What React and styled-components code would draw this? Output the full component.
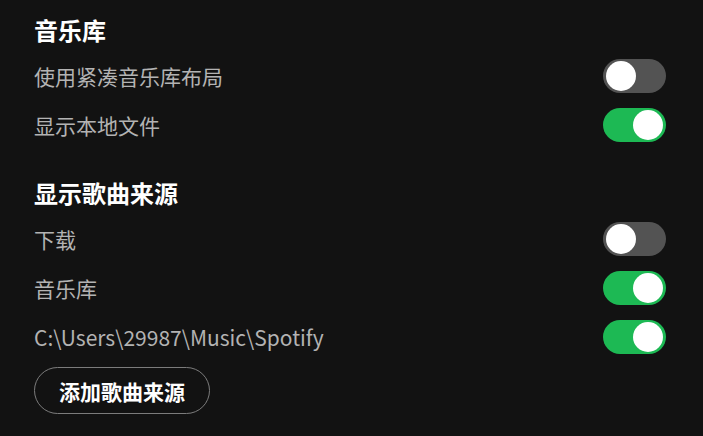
import React, { useState } from "react";
import styled, { createGlobalStyle } from "styled-components";

const GlobalStyle = createGlobalStyle`
  html, body {
    margin: 0;
    background: #121212;
  }
  body {
    font-family: "Noto Sans CJK SC", "Noto Sans", sans-serif;
  }
`;

const sections = [
  {
    title: "音乐库",
    items: [
      { id: "compact", label: "使用紧凑音乐库布局", on: false },
      { id: "local", label: "显示本地文件", on: true },
    ],
  },
  {
    title: "显示歌曲来源",
    items: [
      { id: "downloads", label: "下载", on: false },
      { id: "library", label: "音乐库", on: true },
      { id: "spotify", label: "C:\\Users\\29987\\Music\\Spotify", on: true },
    ],
  },
];

const Toggle = ({ on, onClick }) => (
  <Track $on={on} onClick={onClick} role="switch" aria-checked={on}>
    <Knob $on={on} />
  </Track>
);

const App = () => {
  const [state, setState] = useState(() =>
    Object.fromEntries(
      sections.flatMap((s) => s.items.map((i) => [i.id, i.on]))
    )
  );

  const flip = (id) => setState((s) => ({ ...s, [id]: !s[id] }));

  return (
    <>
      <GlobalStyle />
      <Page>
        {sections.map((section) => (
          <Section key={section.title}>
            <Heading>{section.title}</Heading>
            {section.items.map((item) => (
              <Row key={item.id}>
                <Label>{item.label}</Label>
                <Toggle on={state[item.id]} onClick={() => flip(item.id)} />
              </Row>
            ))}
          </Section>
        ))}
        <AddButton>添加歌曲来源</AddButton>
      </Page>
    </>
  );
};

export default App;

const Page = styled.div`
  padding: 15px 37px 20px 34px;
  display: flex;
  flex-direction: column;
  align-items: flex-start;
`;

const Section = styled.section`
  width: 100%;
  display: flex;
  flex-direction: column;
  & + & {
    margin-top: 29px;
  }
`;

const Heading = styled.h2`
  margin: 0 0 6px;
  height: 30px;
  line-height: 30px;
  font-size: 24px;
  font-weight: 700;
  color: #ffffff;
`;

const Row = styled.div`
  height: 49px;
  display: flex;
  align-items: center;
  justify-content: space-between;
`;

const Label = styled.span`
  font-size: 21px;
  color: #b3b3b3;
`;

const Track = styled.button`
  width: 63px;
  height: 34px;
  border: none;
  border-radius: 17px;
  padding: 2px 3px;
  display: flex;
  align-items: center;
  justify-content: ${(p) => (p.$on ? "flex-end" : "flex-start")};
  background: ${(p) => (p.$on ? "#1db954" : "#535353")};
  cursor: pointer;
`;

const Knob = styled.span`
  width: 30px;
  height: 30px;
  border-radius: 50%;
  background: #ffffff;
`;

const AddButton = styled.button`
  margin-top: 6px;
  height: 47px;
  padding: 0 24px;
  border-radius: 24px;
  border: 1px solid #7c7c7c;
  background: transparent;
  color: #ffffff;
  font-family: "Noto Sans CJK SC", "Noto Sans", sans-serif;
  font-size: 21px;
  font-weight: 700;
  cursor: pointer;
`;
